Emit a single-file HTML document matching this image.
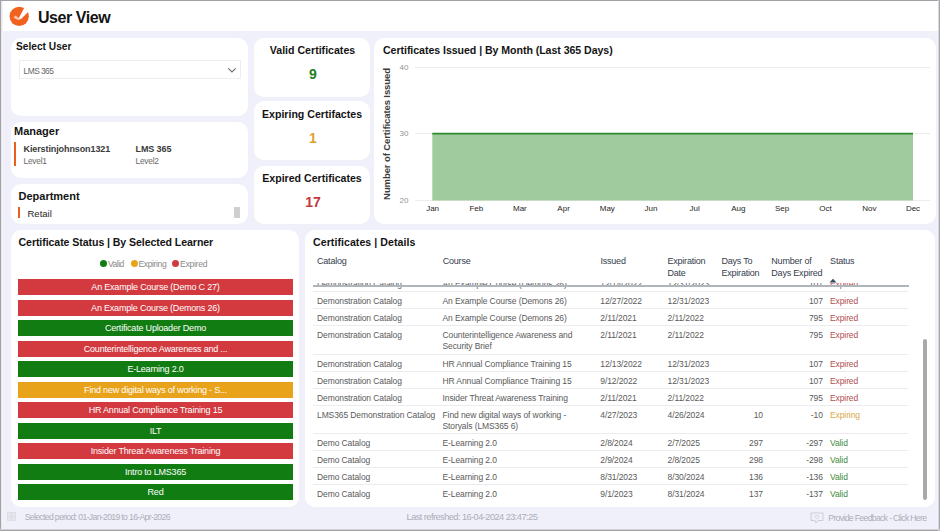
<!DOCTYPE html>
<html><head><meta charset="utf-8">
<style>
*{box-sizing:border-box;margin:0;padding:0}
html,body{width:940px;height:531px;overflow:hidden}
body{font-family:"Liberation Sans",sans-serif;background:#F0F0FB;position:relative;color:#222}
.frame{position:absolute;left:0;top:0;width:940px;height:531px;border-top:1px solid #a2a2a6;border-left:1px solid #a2a2a6;border-right:1px solid #a8a8ac;border-bottom:1px solid #a2a2a6;z-index:50}
.fl{position:absolute;left:1px;top:1px;width:2px;height:529px;background:linear-gradient(90deg,#e2e2e8,#f9f9fd);z-index:50}
.fb{position:absolute;left:0;top:529px;width:940px;height:1px;background:#d0d0d6;z-index:50}
.fr{position:absolute;left:938px;top:0;width:1px;height:531px;background:#d6d6dc;z-index:50}
.header{position:absolute;left:0;top:0;width:940px;height:31px;background:#fff}
.title{position:absolute;left:38px;top:8px;font-size:16px;line-height:20px;font-weight:bold;color:#141414;letter-spacing:-0.45px}
.card{position:absolute;background:#fff;border-radius:10px}
.a{position:absolute;white-space:nowrap}
.ct{position:absolute;font-weight:bold;font-size:10.6px;line-height:12px;color:#141414;white-space:nowrap}
.bar{position:absolute;left:18px;width:275px;height:16px;color:#fff;font-size:9px;text-align:center;line-height:16px;letter-spacing:-0.2px;white-space:nowrap}
.r{background:#D23A40}.g{background:#117C12}.y{background:#E9A31B}
.sep{position:absolute;left:313px;width:595px;height:1px;background:#ededf0}
.td{position:absolute;font-size:8.5px;line-height:11px;color:#5a5a5a;white-space:nowrap;letter-spacing:-0.1px}
.th{position:absolute;font-size:9px;color:#363d4d;white-space:nowrap;line-height:12.2px;letter-spacing:-0.2px}
.rt{text-align:right}
.ex{color:#B24D50}.vl{color:#3F8A40}.xp{color:#D8A848}
.foot{position:absolute;font-size:8px;line-height:10px;color:#adadb8;white-space:nowrap;letter-spacing:-0.1px}
.kpi{position:absolute;font-weight:bold;font-size:10.6px;line-height:12px;color:#141414;white-space:nowrap;text-align:center;width:116px;left:254px}
.num{position:absolute;font-weight:bold;font-size:14px;line-height:14px;white-space:nowrap;text-align:center;width:116px;left:254px}
.ml{position:absolute;font-size:8.4px;color:#6a6a6a;white-space:nowrap;line-height:10px;letter-spacing:-0.25px}
.mn{position:absolute;font-size:9px;font-weight:bold;color:#3a3a3a;white-space:nowrap;line-height:10px;letter-spacing:-0.1px}
.mo{position:absolute;font-size:8px;color:#262626;white-space:nowrap;line-height:10px;text-align:center;width:44px;margin-left:-22px}
.yl{position:absolute;font-size:8px;color:#939393;white-space:nowrap;line-height:10px}
</style></head><body>
<div class="header"></div>
<svg class="a" style="left:0;top:0" width="40" height="31" viewBox="0 0 40 31">
<circle cx="19.2" cy="16.4" r="9.6" fill="#F2621F"/>
<polygon points="24.4,7.4 28.6,11.4 21.4,18.8 19.6,19.6 18.6,18.6" fill="#fff"/>
<polygon points="13.4,17.4 15.6,15.6 19.8,18.8 18.4,20.2" fill="#F9C4AA"/>
</svg>
<div class="title">User View</div>

<div class="card" style="left:11px;top:38px;width:237px;height:78px"></div>
<div class="ct" style="left:16px;top:40.8px;font-size:10.2px">Select User</div>
<div class="a" style="left:19px;top:60px;width:222px;height:19px;border:1px solid #ededf0"></div>
<div class="a" style="left:23.6px;top:65.6px;font-size:8.4px;line-height:11px;color:#666;letter-spacing:-0.55px">LMS 365</div>
<svg class="a" style="left:227px;top:66px" width="11" height="8" viewBox="0 0 11 8"><polyline points="1.3,2.4 5,6 8.7,2.4" fill="none" stroke="#6f6f6f" stroke-width="1.15"/></svg>

<div class="card" style="left:11px;top:122px;width:237px;height:56px"></div>
<div class="ct" style="left:14px;top:124.8px;font-size:11px">Manager</div>
<div class="a" style="left:14px;top:141.5px;width:2px;height:24.5px;background:#E8601C"></div>
<div class="mn" style="left:23.5px;top:143.5px">Kierstinjohnson1321</div>
<div class="ml" style="left:23.5px;top:156px">Level1</div>
<div class="mn" style="left:135.5px;top:143.5px">LMS 365</div>
<div class="ml" style="left:135.5px;top:156px">Level2</div>

<div class="card" style="left:11px;top:184px;width:237px;height:40px"></div>
<div class="ct" style="left:18.5px;top:189.8px;font-size:11px">Department</div>
<div class="a" style="left:18.4px;top:206.8px;width:2px;height:11.5px;background:#E8601C"></div>
<div class="a" style="left:27.5px;top:207.5px;font-size:9.5px;line-height:11px;color:#262626">Retail</div>
<div class="a" style="left:233.8px;top:206.8px;width:6px;height:11.5px;background:#cfcfcf"></div>

<div class="card" style="left:254px;top:38px;width:116px;height:59px"></div>
<div class="card" style="left:254px;top:101.3px;width:116px;height:58.4px"></div>
<div class="card" style="left:254px;top:165.5px;width:116px;height:58.5px"></div>
<div class="kpi" style="top:44px;left:254.5px">Valid Certificates</div>
<div class="num" style="top:66.8px;left:255px;color:#1F7F22">9</div>
<div class="kpi" style="top:107.5px">Expiring Certifactes</div>
<div class="num" style="top:130.7px;left:255px;color:#E0A12E">1</div>
<div class="kpi" style="top:171.6px">Expired Certificates</div>
<div class="num" style="top:194.5px;left:255px;color:#C2393D">17</div>

<div class="card" style="left:374.2px;top:38px;width:562.3px;height:186px"></div>
<div class="ct" style="left:383px;top:44.2px;letter-spacing:-0.05px">Certificates Issued | By Month (Last 365 Days)</div>

<svg class="a" style="left:375px;top:38px" width="560" height="186" viewBox="375 38 560 186">
<line x1="415" y1="67.5" x2="930" y2="67.5" stroke="#ececec" stroke-width="1"/>
<line x1="415" y1="133.5" x2="930" y2="133.5" stroke="#ececec" stroke-width="1"/>
<line x1="415" y1="200.5" x2="930" y2="200.5" stroke="#ececec" stroke-width="1"/>
<rect x="432.3" y="133.5" width="480.7" height="67" fill="#A0CB9E"/>
<line x1="432.3" y1="133.7" x2="913" y2="133.7" stroke="#2F8A30" stroke-width="1.8"/>
</svg>
<div class="yl" style="left:399.5px;top:62.5px">40</div>
<div class="yl" style="left:399.5px;top:128.5px">30</div>
<div class="yl" style="left:399.5px;top:195.5px">20</div>
<div class="a" style="left:387px;top:133.5px;width:0;height:0"><div style="position:absolute;left:-70px;top:-6px;width:140px;text-align:center;transform:rotate(-90deg);font-size:9.5px;line-height:12px;color:#3c3c3c;font-weight:bold;letter-spacing:-0.1px">Number of Certificates Issued</div></div>
<div class="mo" style="left:432.6px;top:203.5px">Jan</div>
<div class="mo" style="left:476.3px;top:203.5px">Feb</div>
<div class="mo" style="left:519.9px;top:203.5px">Mar</div>
<div class="mo" style="left:563.6px;top:203.5px">Apr</div>
<div class="mo" style="left:607.3px;top:203.5px">May</div>
<div class="mo" style="left:651.0px;top:203.5px">Jun</div>
<div class="mo" style="left:694.6px;top:203.5px">Jul</div>
<div class="mo" style="left:738.3px;top:203.5px">Aug</div>
<div class="mo" style="left:782.0px;top:203.5px">Sep</div>
<div class="mo" style="left:825.6px;top:203.5px">Oct</div>
<div class="mo" style="left:869.3px;top:203.5px">Nov</div>
<div class="mo" style="left:913.0px;top:203.5px">Dec</div>
<div class="card" style="left:11px;top:230px;width:288px;height:276.5px"></div>
<div class="ct" style="left:18.5px;top:236px;letter-spacing:-0.08px">Certificate Status | By Selected Learner</div>
<div class="a" style="left:100px;top:260px;width:7px;height:7px;border-radius:50%;background:#117C12"></div>
<div class="a" style="left:108px;top:258.5px;font-size:8.6px;line-height:10px;color:#8a8a8a;letter-spacing:-0.55px">Valid</div>
<div class="a" style="left:130.5px;top:260px;width:7px;height:7px;border-radius:50%;background:#E9A31B"></div>
<div class="a" style="left:138.5px;top:258.5px;font-size:8.6px;line-height:10px;color:#8a8a8a;letter-spacing:-0.4px">Expiring</div>
<div class="a" style="left:172.2px;top:260px;width:7px;height:7px;border-radius:50%;background:#D23A40"></div>
<div class="a" style="left:180px;top:258.5px;font-size:8.6px;line-height:10px;color:#8a8a8a;letter-spacing:-0.28px">Expired</div>
<div class="bar r" style="top:279.00px">An Example Course (Demo C 27)</div>
<div class="bar r" style="top:299.52px">An Example Course (Demons 26)</div>
<div class="bar g" style="top:320.04px">Certificate Uploader Demo</div>
<div class="bar r" style="top:340.56px">Counterintelligence Awareness and ...</div>
<div class="bar g" style="top:361.08px">E-Learning 2.0</div>
<div class="bar y" style="top:381.60px">Find new digital ways of working - S...</div>
<div class="bar r" style="top:402.12px">HR Annual Compliance Training 15</div>
<div class="bar g" style="top:422.64px">ILT</div>
<div class="bar r" style="top:443.16px">Insider Threat Awareness Training</div>
<div class="bar g" style="top:463.68px">Intro to LMS365</div>
<div class="bar g" style="top:484.20px">Red</div>
<div class="card" style="left:305px;top:230px;width:630px;height:276.5px"></div>
<div class="ct" style="left:313px;top:236px;letter-spacing:0.05px">Certificates | Details</div>
<div class="a" style="left:305px;top:282.5px;width:630px;height:222.5px;overflow:hidden">
<div class="td" style="left:12px;top:-3.2px">Demonstration Catalog</div>
<div class="td" style="left:137.5px;top:-3.2px">An Example Course (Demons 26)</div>
<div class="td" style="left:295.3px;top:-3.2px">12/14/2022</div>
<div class="td" style="left:362.5px;top:-3.2px">12/31/2023</div>
<div class="td rt" style="left:477px;width:40.8px;top:-3.2px">107</div>
<div class="td ex" style="left:525px;top:-3.2px">Expired</div>
<div class="td" style="left:12px;top:13.2px">Demonstration Catalog</div>
<div class="td" style="left:137.5px;top:13.2px">An Example Course (Demons 26)</div>
<div class="td" style="left:295.3px;top:13.2px">12/27/2022</div>
<div class="td" style="left:362.5px;top:13.2px">12/31/2023</div>
<div class="td rt" style="left:477px;width:40.8px;top:13.2px">107</div>
<div class="td ex" style="left:525px;top:13.2px">Expired</div>
<div class="td" style="left:12px;top:30.2px">Demonstration Catalog</div>
<div class="td" style="left:137.5px;top:30.2px">An Example Course (Demons 26)</div>
<div class="td" style="left:295.3px;top:30.2px">2/11/2021</div>
<div class="td" style="left:362.5px;top:30.2px">2/11/2022</div>
<div class="td rt" style="left:477px;width:40.8px;top:30.2px">795</div>
<div class="td ex" style="left:525px;top:30.2px">Expired</div>
<div class="td" style="left:12px;top:47.2px">Demonstration Catalog</div>
<div class="td" style="left:137.5px;top:47.2px">Counterintelligence Awareness and</div>
<div class="td" style="left:137.5px;top:58.2px">Security Brief</div>
<div class="td" style="left:295.3px;top:47.2px">2/11/2021</div>
<div class="td" style="left:362.5px;top:47.2px">2/11/2022</div>
<div class="td rt" style="left:477px;width:40.8px;top:47.2px">795</div>
<div class="td ex" style="left:525px;top:47.2px">Expired</div>
<div class="td" style="left:12px;top:76.2px">Demonstration Catalog</div>
<div class="td" style="left:137.5px;top:76.2px">HR Annual Compliance Training 15</div>
<div class="td" style="left:295.3px;top:76.2px">12/13/2022</div>
<div class="td" style="left:362.5px;top:76.2px">12/31/2023</div>
<div class="td rt" style="left:477px;width:40.8px;top:76.2px">107</div>
<div class="td ex" style="left:525px;top:76.2px">Expired</div>
<div class="td" style="left:12px;top:93.2px">Demonstration Catalog</div>
<div class="td" style="left:137.5px;top:93.2px">HR Annual Compliance Training 15</div>
<div class="td" style="left:295.3px;top:93.2px">9/12/2022</div>
<div class="td" style="left:362.5px;top:93.2px">12/31/2023</div>
<div class="td rt" style="left:477px;width:40.8px;top:93.2px">107</div>
<div class="td ex" style="left:525px;top:93.2px">Expired</div>
<div class="td" style="left:12px;top:110.2px">Demonstration Catalog</div>
<div class="td" style="left:137.5px;top:110.2px">Insider Threat Awareness Training</div>
<div class="td" style="left:295.3px;top:110.2px">2/11/2021</div>
<div class="td" style="left:362.5px;top:110.2px">2/11/2022</div>
<div class="td rt" style="left:477px;width:40.8px;top:110.2px">795</div>
<div class="td ex" style="left:525px;top:110.2px">Expired</div>
<div class="td" style="left:12px;top:127.2px">LMS365 Demonstration Catalog</div>
<div class="td" style="left:137.5px;top:127.2px">Find new digital ways of working -</div>
<div class="td" style="left:137.5px;top:138.2px">Storyals (LMS365 6)</div>
<div class="td" style="left:295.3px;top:127.2px">4/27/2023</div>
<div class="td" style="left:362.5px;top:127.2px">4/26/2024</div>
<div class="td rt" style="left:418px;width:40px;top:127.2px">10</div>
<div class="td rt" style="left:477px;width:40.8px;top:127.2px">-10</div>
<div class="td xp" style="left:525px;top:127.2px">Expiring</div>
<div class="td" style="left:12px;top:155.2px">Demo Catalog</div>
<div class="td" style="left:137.5px;top:155.2px">E-Learning 2.0</div>
<div class="td" style="left:295.3px;top:155.2px">2/8/2024</div>
<div class="td" style="left:362.5px;top:155.2px">2/7/2025</div>
<div class="td rt" style="left:418px;width:40px;top:155.2px">297</div>
<div class="td rt" style="left:477px;width:40.8px;top:155.2px">-297</div>
<div class="td vl" style="left:525px;top:155.2px">Valid</div>
<div class="td" style="left:12px;top:172.2px">Demo Catalog</div>
<div class="td" style="left:137.5px;top:172.2px">E-Learning 2.0</div>
<div class="td" style="left:295.3px;top:172.2px">2/9/2024</div>
<div class="td" style="left:362.5px;top:172.2px">2/8/2025</div>
<div class="td rt" style="left:418px;width:40px;top:172.2px">298</div>
<div class="td rt" style="left:477px;width:40.8px;top:172.2px">-298</div>
<div class="td vl" style="left:525px;top:172.2px">Valid</div>
<div class="td" style="left:12px;top:189.2px">Demo Catalog</div>
<div class="td" style="left:137.5px;top:189.2px">E-Learning 2.0</div>
<div class="td" style="left:295.3px;top:189.2px">8/31/2023</div>
<div class="td" style="left:362.5px;top:189.2px">8/30/2024</div>
<div class="td rt" style="left:418px;width:40px;top:189.2px">136</div>
<div class="td rt" style="left:477px;width:40.8px;top:189.2px">-136</div>
<div class="td vl" style="left:525px;top:189.2px">Valid</div>
<div class="td" style="left:12px;top:206.2px">Demo Catalog</div>
<div class="td" style="left:137.5px;top:206.2px">E-Learning 2.0</div>
<div class="td" style="left:295.3px;top:206.2px">9/1/2023</div>
<div class="td" style="left:362.5px;top:206.2px">8/31/2024</div>
<div class="td rt" style="left:418px;width:40px;top:206.2px">137</div>
<div class="td rt" style="left:477px;width:40.8px;top:206.2px">-137</div>
<div class="td vl" style="left:525px;top:206.2px">Valid</div>
<div class="a" style="left:8px;top:8.5px;width:595px;height:1px;background:#ececf0"></div>
<div class="a" style="left:8px;top:25.5px;width:595px;height:1px;background:#ececf0"></div>
<div class="a" style="left:8px;top:42.5px;width:595px;height:1px;background:#ececf0"></div>
<div class="a" style="left:8px;top:71.5px;width:595px;height:1px;background:#ececf0"></div>
<div class="a" style="left:8px;top:88.5px;width:595px;height:1px;background:#ececf0"></div>
<div class="a" style="left:8px;top:105.5px;width:595px;height:1px;background:#ececf0"></div>
<div class="a" style="left:8px;top:122.5px;width:595px;height:1px;background:#ececf0"></div>
<div class="a" style="left:8px;top:150.5px;width:595px;height:1px;background:#ececf0"></div>
<div class="a" style="left:8px;top:167.5px;width:595px;height:1px;background:#ececf0"></div>
<div class="a" style="left:8px;top:184.5px;width:595px;height:1px;background:#ececf0"></div>
<div class="a" style="left:8px;top:201.5px;width:595px;height:1px;background:#ececf0"></div>
</div>
<div class="a" style="left:312px;top:252px;width:597px;height:30.5px;background:#fff"></div>
<div class="a" style="left:313px;top:285px;width:595.5px;height:2px;background:#b0b4bb"></div>
<div class="th" style="left:317px;top:254.7px">Catalog</div>
<div class="th" style="left:442.7px;top:254.7px">Course</div>
<div class="th" style="left:600.4px;top:254.7px">Issued</div>
<div class="th" style="left:667.4px;top:254.7px">Expiration<br>Date</div>
<div class="th" style="left:721.4px;top:254.7px">Days To<br>Expiration</div>
<div class="th" style="left:771.3px;top:254.7px">Number of<br>Days Expired</div>
<div class="th" style="left:830.1px;top:254.7px">Status</div>
<svg class="a" style="left:829px;top:278px" width="8" height="5" viewBox="0 0 8 5"><polygon points="0.5,4.5 4,0.8 7.5,4.5" fill="#3b4a63"/></svg>
<div class="a" style="left:922.5px;top:338.5px;width:4.5px;height:161px;border-radius:2.5px;background:#a9a9a9"></div>
<svg class="a" style="left:7px;top:512px" width="9" height="9" viewBox="0 0 9 9"><rect x="0.5" y="0.5" width="8" height="8" fill="#e6e6ee" stroke="#dadae2" stroke-width="0.7"/><line x1="4.5" y1="0.5" x2="4.5" y2="8.5" stroke="#d8d8e0" stroke-width="0.7"/><line x1="0.5" y1="4.5" x2="8.5" y2="4.5" stroke="#d8d8e0" stroke-width="0.7"/></svg>
<div class="foot" style="left:24.7px;top:511.6px;font-size:8.7px;letter-spacing:-0.68px">Selected period: 01-Jan-2019 to 16-Apr-2026</div>
<div class="foot" style="left:406.6px;top:511.8px;font-size:9.3px;letter-spacing:-0.58px">Last refreshed: 16-04-2024 23:47:25</div>
<svg class="a" style="left:810px;top:511.5px" width="14" height="12" viewBox="0 0 14 12"><path d="M1,1 H13 V8.5 H8 L6,11 L5,8.5 H1 Z" fill="none" stroke="#c8c8d2" stroke-width="0.9"/><path d="M5,4.6 C5,3 7,3 7,4.3 C7,3 9,3 9,4.6 C9,5.6 7,6.8 7,6.8 C7,6.8 5,5.6 5,4.6 Z" fill="none" stroke="#c8c8d2" stroke-width="0.7"/></svg>
<div class="foot" style="left:828.3px;top:513.3px;font-size:8.7px;letter-spacing:-0.68px">Provide Feedback - Click Here</div>
<div class="frame"></div><div class="fl"></div><div class="fb"></div><div class="fr"></div>
</body></html>
